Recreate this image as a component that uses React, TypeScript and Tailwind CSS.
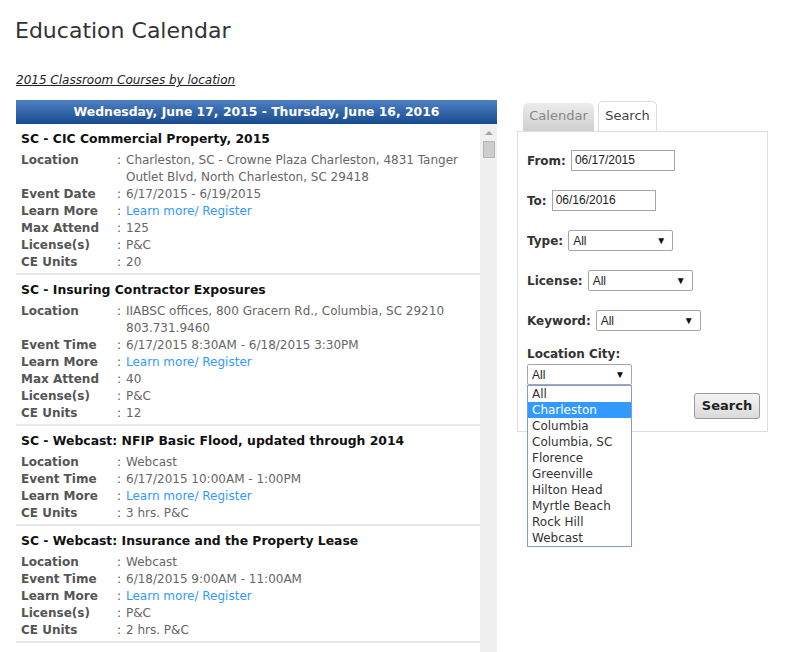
import { Fragment } from 'react'

type Row = { label: string; value: string; link?: boolean }
type Event = { title: string; rows: Row[] }

const events: Event[] = [
  {
    title: 'SC - CIC Commercial Property, 2015',
    rows: [
      { label: 'Location', value: 'Charleston, SC - Crowne Plaza Charleston, 4831 Tanger Outlet Blvd, North Charleston, SC 29418' },
      { label: 'Event Date', value: '6/17/2015 - 6/19/2015' },
      { label: 'Learn More', value: 'Learn more/ Register', link: true },
      { label: 'Max Attend', value: '125' },
      { label: 'License(s)', value: 'P&C' },
      { label: 'CE Units', value: '20' },
    ],
  },
  {
    title: 'SC - Insuring Contractor Exposures',
    rows: [
      { label: 'Location', value: 'IIABSC offices, 800 Gracern Rd., Columbia, SC 29210 803.731.9460' },
      { label: 'Event Time', value: '6/17/2015 8:30AM - 6/18/2015 3:30PM' },
      { label: 'Learn More', value: 'Learn more/ Register', link: true },
      { label: 'Max Attend', value: '40' },
      { label: 'License(s)', value: 'P&C' },
      { label: 'CE Units', value: '12' },
    ],
  },
  {
    title: 'SC - Webcast: NFIP Basic Flood, updated through 2014',
    rows: [
      { label: 'Location', value: 'Webcast' },
      { label: 'Event Time', value: '6/17/2015 10:00AM - 1:00PM' },
      { label: 'Learn More', value: 'Learn more/ Register', link: true },
      { label: 'CE Units', value: '3 hrs. P&C' },
    ],
  },
  {
    title: 'SC - Webcast: Insurance and the Property Lease',
    rows: [
      { label: 'Location', value: 'Webcast' },
      { label: 'Event Time', value: '6/18/2015 9:00AM - 11:00AM' },
      { label: 'Learn More', value: 'Learn more/ Register', link: true },
      { label: 'License(s)', value: 'P&C' },
      { label: 'CE Units', value: '2 hrs. P&C' },
    ],
  },
]

const cities = ['All', 'Charleston', 'Columbia', 'Columbia, SC', 'Florence', 'Greenville', 'Hilton Head', 'Myrtle Beach', 'Rock Hill', 'Webcast']

const verdana = { fontFamily: '"DejaVu Sans", Verdana, sans-serif' }

function FakeSelect({ width = 'w-[105px]' }: { width?: string }) {
  return (
    <div className={`${width} h-[21px] border border-[#a6a6a6] rounded-[2px] bg-white flex items-center justify-between pl-[4px] pr-[6px] text-[12px] text-[#222] font-['Liberation_Sans',Arial,sans-serif]`}>
      <span>All</span>
      <span className="text-[10px] text-[#111]">▼</span>
    </div>
  )
}

function EventBlock({ ev }: { ev: Event }) {
  return (
    <div className="pt-[5px] pb-[2px] pl-[5px] pr-[4px] border-b-2 border-[#e8e8e8]">
      <div className="text-[12.4px] font-bold leading-[20px] text-[#111] mb-[3px] whitespace-nowrap">{ev.title}</div>
      <div className="grid grid-cols-[96px_9px_1fr] text-[12px] leading-[17px]">
        {ev.rows.map((r, i) => (
          <Fragment key={i}>
            <div className="font-bold text-[#555]">{r.label}</div>
            <div className="text-[#555]">:</div>
            <div className={r.link ? 'text-[#3399ff]' : 'text-[#666]'}>{r.value}</div>
          </Fragment>
        ))}
      </div>
    </div>
  )
}

export default function App() {
  return (
    <div className="w-[800px] h-[652px] overflow-hidden bg-white text-[#333] pl-[16px]" style={verdana}>
      <h1 className="text-[22px] leading-[26px] pt-[18px] text-[#333] -ml-[1px]">Education Calendar</h1>
      <div className="mt-[28px] text-[12px] italic underline leading-[16px] text-[#222]">2015 Classroom Courses by location</div>

      <div className="flex mt-[12px]">
        {/* event list */}
        <div className="w-[481px]">
          <div className="h-[24px] bg-gradient-to-b from-[#4f80c4] to-[#174b8f] text-white text-[12.4px] font-bold leading-[24px] text-center">
            Wednesday, June 17, 2015 - Thursday, June 16, 2016
          </div>
          <div className="flex h-[540px]">
            <div className="w-[464px] overflow-hidden">
              {events.map((ev, i) => (
                <EventBlock key={i} ev={ev} />
              ))}
            </div>
            <div className="w-[17px] bg-[#f0f0f0] flex flex-col items-center pt-[7px]">
              <div className="w-0 h-0 border-l-[4px] border-r-[4px] border-b-[4px] border-l-transparent border-r-transparent border-b-[#a3a3a3]" />
              <div className="mt-[6px] w-[12px] h-[17px] bg-[#cdcdcd] border border-[#b5b5b5]" />
            </div>
          </div>
        </div>

        {/* search panel */}
        <div className="ml-[20px] w-[251px] mt-[1px]">
          <div className="flex items-end pl-[6px] gap-[4px] h-[30px]">
            <div className="w-[71px] h-[28px] rounded-t-[5px] bg-gradient-to-b from-[#ececec] to-[#cfcfcf] text-[#888] text-[13px] leading-[26px] text-center">
              Calendar
            </div>
            <div className="relative top-[1px] w-[59px] h-[31px] rounded-t-[5px] bg-white border border-b-0 border-[#dcdcdc] text-[#444] text-[13px] leading-[28px] text-center">
              Search
            </div>
          </div>
          <div className="relative h-[301px] border border-[#dedede] pl-[9px] pt-[18px]">
            <div className="flex items-center h-[21px]">
              <span className="text-[12px] font-bold text-[#333] mr-[5px]">From:</span>
              <div className="w-[104px] h-[21px] border border-[#a6a6a6] px-[3px] text-[12px] leading-[19px] text-[#222] font-['Liberation_Sans',Arial,sans-serif]">06/17/2015</div>
            </div>
            <div className="flex items-center h-[21px] mt-[19px]">
              <span className="text-[12px] font-bold text-[#333] mr-[5px]">To:</span>
              <div className="w-[104px] h-[21px] border border-[#a6a6a6] px-[3px] text-[12px] leading-[19px] text-[#222] font-['Liberation_Sans',Arial,sans-serif]">06/16/2016</div>
            </div>
            <div className="flex items-center h-[21px] mt-[19px]">
              <span className="text-[12px] font-bold text-[#333] mr-[5px]">Type:</span>
              <FakeSelect />
            </div>
            <div className="flex items-center h-[21px] mt-[19px]">
              <span className="text-[12px] font-bold text-[#333] mr-[5px]">License:</span>
              <FakeSelect />
            </div>
            <div className="flex items-center h-[21px] mt-[19px]">
              <span className="text-[12px] font-bold text-[#333] mr-[5px]">Keyword:</span>
              <FakeSelect />
            </div>
            <div className="mt-[15px] text-[12px] font-bold text-[#333] leading-[16px]">Location City:</div>
            <div className="relative mt-[2px] w-[105px]">
              <FakeSelect />
              <div className="absolute left-0 top-[21px] w-[105px] bg-white border border-[#7f9dd0] z-10">
                {cities.map((c) => (
                  <div
                    key={c}
                    className={`h-[16px] leading-[16px] text-[12px] pl-[4px] ${c === 'Charleston' ? 'bg-[#3399ff] text-white' : 'text-[#333]'}`}
                  >
                    {c}
                  </div>
                ))}
              </div>
            </div>
            <div className="flex justify-end pr-[7px] mt-[8px]">
              <button className="w-[66px] h-[26px] border border-[#999] rounded-[3px] bg-gradient-to-b from-[#f4f4f4] to-[#dadada] text-[13px] font-bold text-[#222]">
                Search
              </button>
            </div>
          </div>
        </div>
      </div>
    </div>
  )
}
